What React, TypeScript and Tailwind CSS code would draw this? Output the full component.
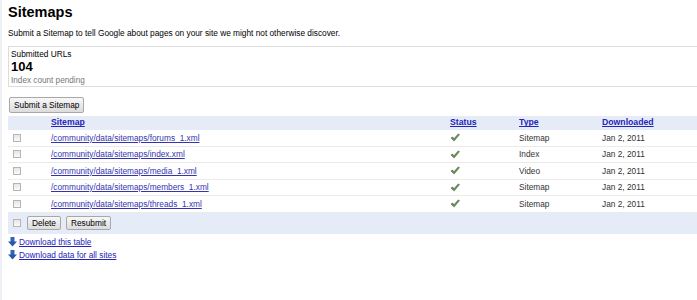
const rows = [
  { path: "/community/data/sitemaps/forums_1.xml", type: "Sitemap" },
  { path: "/community/data/sitemaps/index.xml", type: "Index" },
  { path: "/community/data/sitemaps/media_1.xml", type: "Video" },
  { path: "/community/data/sitemaps/members_1.xml", type: "Sitemap" },
  { path: "/community/data/sitemaps/threads_1.xml", type: "Sitemap" },
];

function Box() {
  return (
    <span className="inline-block w-[8px] h-[8px] border border-[#b5b5b5] bg-gradient-to-b from-[#e6e6e6] to-[#fafafa]" />
  );
}

function Check() {
  return (
    <svg width="10" height="9" viewBox="0 0 11 10">
      <path d="M1 5.5 L3 4.5 L4.3 6.5 L9 1 L10.5 1.8 L4.5 9 Z" fill="#6a8c55" stroke="#44683a" strokeWidth="0.6" />
    </svg>
  );
}

function Arrow() {
  return (
    <svg width="9" height="10" viewBox="0 0 9 10">
      <rect x="2.5" y="0" width="4" height="5" fill="#2f64b8" />
      <path d="M0 4.5 H9 L4.5 9.5 Z" fill="#2558ac" />
    </svg>
  );
}

function Btn({ children }: { children: React.ReactNode }) {
  return (
    <button className="h-full px-[4px] border border-[#a8a8a8] rounded-[2px] bg-gradient-to-b from-[#f8f8f8] to-[#dcdcdc] text-[8.3px] leading-none text-black">
      {children}
    </button>
  );
}

export default function App() {
  return (
    <div className="w-[697px] h-[300px] bg-white flex font-['Liberation_Sans',Arial,sans-serif] text-black overflow-hidden">
      <div className="w-[2px] bg-[#eef0f6]" />
      <div className="flex-1 pl-[6px]">
        <h1 className="text-[14.5px] font-bold leading-none mt-[5px]">Sitemaps</h1>
        <p className="text-[8.3px] mt-[9.5px] leading-[8.5px]">
          Submit a Sitemap to tell Google about pages on your site we might not otherwise discover.
        </p>
        <div className="mt-[8.5px] border border-[#dcdcdc] border-r-0 h-[41px] pl-[2px] pt-[3px]">
          <div className="text-[8.3px] leading-[9px]">Submitted URLs</div>
          <div className="text-[13px] font-bold leading-[16px]">104</div>
          <div className="text-[8.2px] leading-[12px] text-[#777]">Index count pending</div>
        </div>
        <div className="mt-[10px] pl-[1px] h-[16px] flex">
          <Btn>Submit a Sitemap</Btn>
        </div>
        <div className="mt-[3px] text-[8.3px]">
          <div className="grid grid-cols-[43px_399px_69px_83px_1fr] h-[14px] items-center bg-[#e6ebf8] font-bold text-[8.7px]">
            <span />
            <a className="text-[#2424b8] underline">Sitemap</a>
            <a className="text-[#2424b8] underline">Status</a>
            <a className="text-[#2424b8] underline">Type</a>
            <a className="text-[#2424b8] underline">Downloaded</a>
          </div>
          {rows.map((r) => (
            <div
              key={r.path}
              className="grid grid-cols-[43px_399px_69px_83px_1fr] h-[16.5px] items-center border-b border-[#ebebeb]"
            >
              <span className="pl-[5px] flex">
                <Box />
              </span>
              <a className="text-[#3434b0] underline">{r.path}</a>
              <span className="flex">
                <Check />
              </span>
              <span className="text-[#333]">{r.type}</span>
              <span className="text-[#333]">Jan 2, 2011</span>
            </div>
          ))}
          <div className="h-[21px] bg-[#e6ebf8] flex items-center pl-[5px]">
            <Box />
            <span className="ml-[6px] h-[14px] flex gap-[5px]">
              <Btn>Delete</Btn>
              <Btn>Resubmit</Btn>
            </span>
          </div>
        </div>
        <div className="mt-[2px] text-[8.3px] leading-[13px] flex flex-col">
          <div className="flex items-center">
            <Arrow />
            <a className="text-[#2424b8] underline ml-[2px]">Download this table</a>
          </div>
          <div className="flex items-center">
            <Arrow />
            <a className="text-[#2424b8] underline ml-[2px]">Download data for all sites</a>
          </div>
        </div>
      </div>
    </div>
  );
}
